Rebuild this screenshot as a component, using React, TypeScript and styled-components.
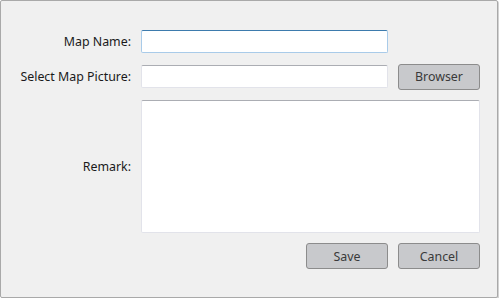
import React from 'react';
import styled, { createGlobalStyle, css } from 'styled-components';

const GlobalStyle = createGlobalStyle`
  html, body {
    margin: 0;
    padding: 0;
    background: #ffffff;
  }
  body {
    font-family: 'Noto Sans', 'Open Sans', sans-serif;
  }
`;

const Window = styled.div`
  box-sizing: border-box;
  width: 498px;
  height: 298px;
  border: 1px solid #a9a9a9;
  border-radius: 2px;
  background: #f0f0f0;
  box-shadow: 1px 1px 0 #d2d2d2;
`;

const Form = styled.div`
  display: grid;
  grid-template-columns: 130px 247px 82px;
  grid-template-rows: 23px 27px 133px 26px;
  column-gap: 10px;
  row-gap: 10px;
  padding-top: 29px;
`;

const Label = styled.label`
  justify-self: end;
  align-self: center;
  font-size: 12.4px;
  color: #1a1a1a;
  white-space: nowrap;
`;

const fieldBorder = css<{ $focused?: boolean }>`
  box-sizing: border-box;
  background: #ffffff;
  border: 1px solid #e2e3ea;
  border-top-color: #abadb3;
  border-radius: 2px;
  outline: none;
  ${({ $focused }) =>
    $focused &&
    css`
      border-color: #a9cbe9;
      border-top-color: #3d7bad;
    `}
`;

const TextInput = styled.input<{ $focused?: boolean }>`
  ${fieldBorder};
  align-self: center;
  width: 100%;
  height: 23px;
  padding: 0 4px;
  font: inherit;
  font-size: 12px;
`;

const TextArea = styled.textarea`
  ${fieldBorder};
  grid-column: 2 / 4;
  width: 100%;
  height: 100%;
  resize: none;
  padding: 4px;
  font: inherit;
  font-size: 12px;
`;

const Button = styled.button<{ $col?: number }>`
  box-sizing: border-box;
  width: 82px;
  height: 26px;
  align-self: center;
  justify-self: end;
  ${({ $col }) => $col && `grid-column: ${$col};`}
  background: #c8c9cc;
  border: 1px solid #8c8c8c;
  border-radius: 3px;
  font-family: inherit;
  font-size: 12.4px;
  color: #3a3a3a;
  padding: 0;
`;

export default function App() {
  return (
    <>
      <GlobalStyle />
      <Window>
        <Form>
          <Label htmlFor="map-name">Map Name:</Label>
          <TextInput id="map-name" $focused />
          <span />

          <Label htmlFor="map-picture">Select Map Picture:</Label>
          <TextInput id="map-picture" />
          <Button>Browser</Button>

          <Label htmlFor="remark">Remark:</Label>
          <TextArea id="remark" />

          <Button $col={2}>Save</Button>
          <Button $col={3}>Cancel</Button>
        </Form>
      </Window>
    </>
  );
}
